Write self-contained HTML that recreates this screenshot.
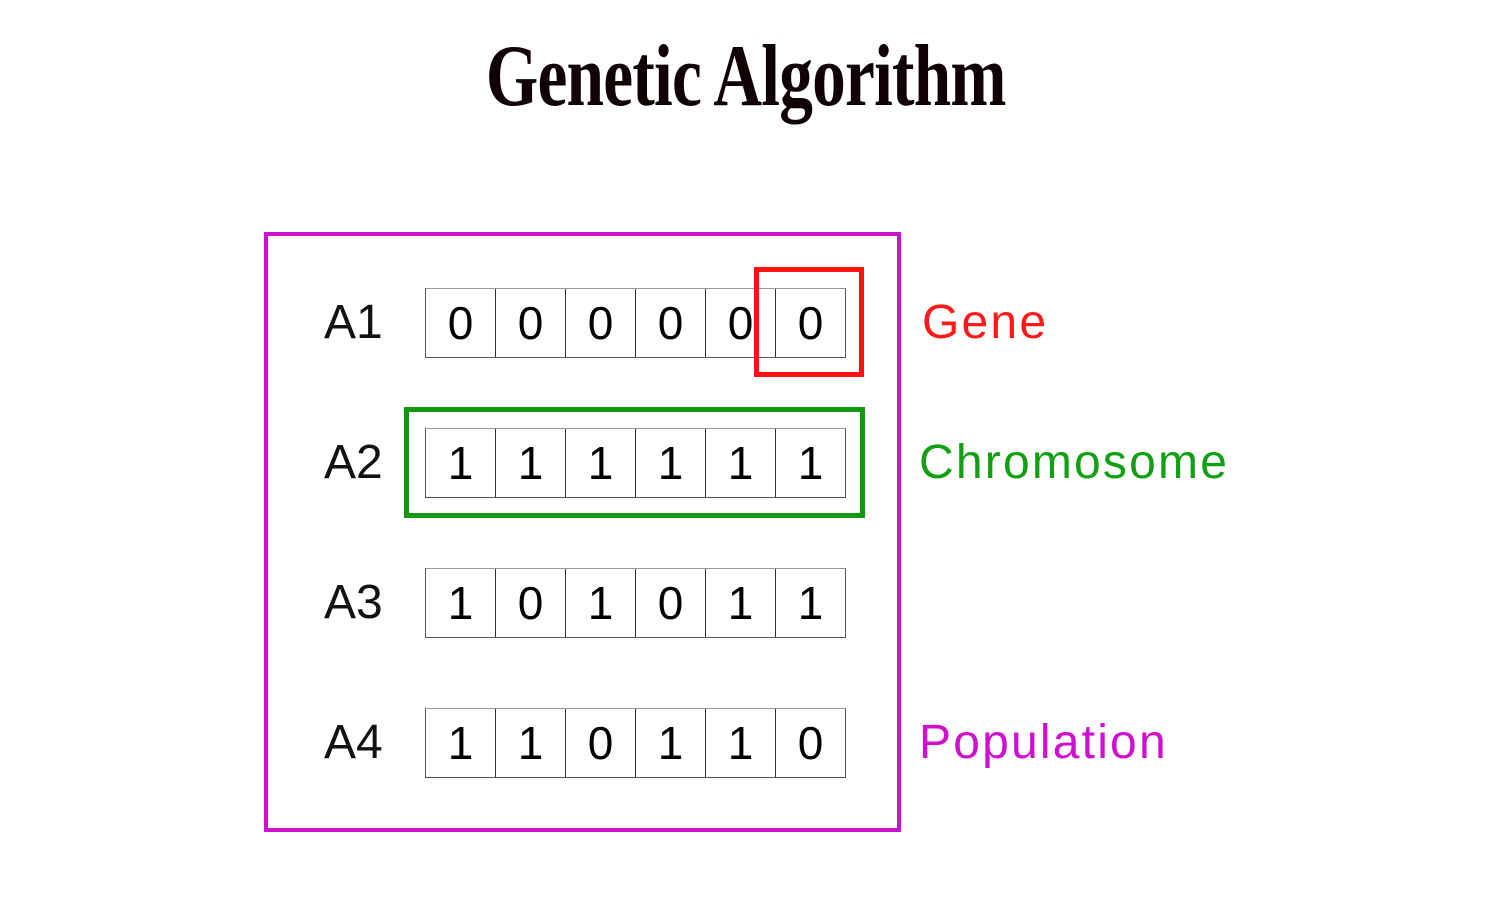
<!DOCTYPE html>
<html><head><meta charset="utf-8"><style>
body{margin:0;width:1500px;height:900px;background:#fff;position:relative;overflow:hidden;font-family:"Liberation Sans",sans-serif}
.t{position:absolute;left:0;width:1500px;top:26px;text-align:center;font-family:"Liberation Serif",serif;font-weight:bold;font-size:88px;color:#100008;letter-spacing:-1px}
.t span{display:inline-block;transform:translateX(-4px) scaleX(0.765);transform-origin:center}
.box{position:absolute;box-sizing:border-box}
.row{position:absolute;left:425px;display:flex;border:1px solid #555;border-top-color:#999}
.c{width:69px;height:68px;border-left:1px solid #333;font-size:46px;line-height:68px;text-align:center;color:#000}
.c:first-child{border-left:none}
.lab{position:absolute;left:324px;font-size:48px;line-height:70px;color:#111}
.n{position:absolute;font-size:48px;line-height:70px;letter-spacing:2.2px}
</style></head><body>
<div class="t"><span>Genetic Algorithm</span></div>
<div class="box" style="left:264px;top:232px;width:637px;height:600px;border:4px solid #cc11cc"></div>
<div class="lab" style="top:288px">A1</div>
<div class="lab" style="top:428px">A2</div>
<div class="lab" style="top:568px">A3</div>
<div class="lab" style="top:708px">A4</div>
<div class="row" style="top:288px"><div class="c">0</div><div class="c">0</div><div class="c">0</div><div class="c">0</div><div class="c">0</div><div class="c">0</div></div>
<div class="row" style="top:428px"><div class="c">1</div><div class="c">1</div><div class="c">1</div><div class="c">1</div><div class="c">1</div><div class="c">1</div></div>
<div class="row" style="top:568px"><div class="c">1</div><div class="c">0</div><div class="c">1</div><div class="c">0</div><div class="c">1</div><div class="c">1</div></div>
<div class="row" style="top:708px"><div class="c">1</div><div class="c">1</div><div class="c">0</div><div class="c">1</div><div class="c">1</div><div class="c">0</div></div>
<div class="box" style="left:754px;top:267px;width:110px;height:110px;border:5px solid #ff1111"></div>
<div class="box" style="left:404px;top:407px;width:461px;height:111px;border:5px solid #119911"></div>
<div class="n" style="left:922px;top:288px;color:#ff1a1a">Gene</div>
<div class="n" style="left:919px;top:428px;color:#11a011">Chromosome</div>
<div class="n" style="left:919px;top:708px;color:#d010d0">Population</div>
</body></html>
